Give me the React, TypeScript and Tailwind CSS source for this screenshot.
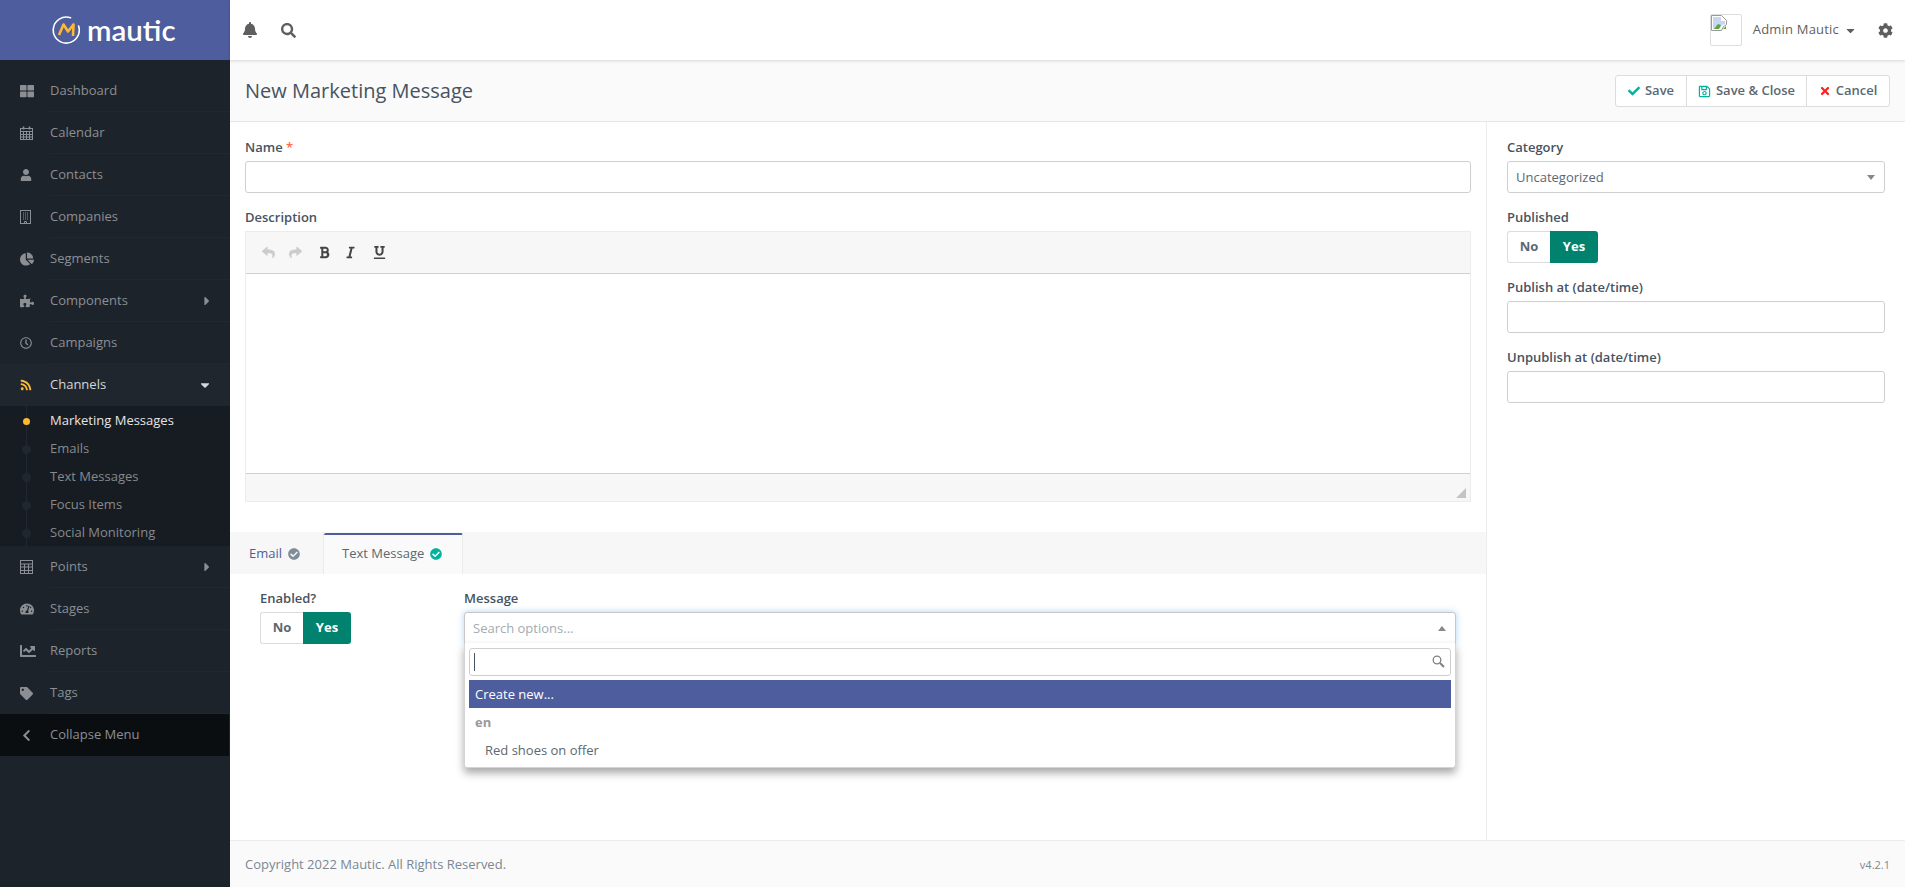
import {
  FaBell,
  FaBold,
  FaCaretDown,
  FaCaretRight,
  FaCheck,
  FaCheckCircle,
  FaChartPie,
  FaChevronLeft,
  FaCog,
  FaItalic,
  FaPuzzlePiece,
  FaReply,
  FaRegClock,
  FaRegSave,
  FaRss,
  FaSearch,
  FaShare,
  FaTag,
  FaTachometerAlt,
  FaThLarge,
  FaTimes,
  FaUnderline,
  FaUser,
  FaChartLine,
} from "react-icons/fa";
import type { ReactNode } from "react";

function CalendarIcon() {
  return (
    <svg width="13" height="14" viewBox="0 0 13 14" fill="none" stroke="currentColor" strokeWidth="1">
      <rect x="0.5" y="2.5" width="12" height="11" />
      <path d="M0.5 5.5h12M0.5 8.5h12M0.5 11h12M3.5 5.5v8M6.5 5.5v8M9.5 5.5v8" />
      <path d="M3.5 0.5v3M9.5 0.5v3" strokeWidth="1.6" />
    </svg>
  );
}

function BuildingIcon() {
  return (
    <svg width="11" height="14" viewBox="0 0 11 14" fill="none" stroke="currentColor" strokeWidth="1">
      <rect x="0.5" y="0.5" width="10" height="13" />
      <path d="M3 3h1M5 3h1M7 3h1M3 5h1M5 5h1M7 5h1M3 7h1M5 7h1M7 7h1M3 9h1M5 9h1M7 9h1" strokeWidth="1.2" />
      <path d="M4.5 13.5v-2h2v2" />
    </svg>
  );
}

function CalcIcon() {
  return (
    <svg width="13" height="14" viewBox="0 0 13 14" fill="none" stroke="currentColor" strokeWidth="1">
      <rect x="0.5" y="0.5" width="12" height="13" />
      <path d="M0.5 4h12M0.5 7h12M0.5 10.5h12M4.5 4v9.5M8.5 4v9.5" />
    </svg>
  );
}

function Logo() {
  return (
    <div className="flex items-center gap-[7px]">
      <svg width="28" height="28" viewBox="0 0 28 28" fill="none">
        <path d="M18.5 1.8A13 13 0 1 0 26.6 10" stroke="#fff" strokeWidth="1.6" strokeLinecap="round" />
        <path d="M7 19 11.5 8.5 16 15.5 21.5 8.5 21 20" stroke="#fdb933" strokeWidth="2.6" strokeLinejoin="round" />
      </svg>
      <span className="font-['Lato',sans-serif] text-[29.5px] font-semibold leading-none text-white">mautic</span>
    </div>
  );
}

function Arrow({ up }: { up?: boolean }) {
  return (
    <svg width="8" height="5" viewBox="0 0 8 5" className="text-[#888]">
      <path d={up ? "M4 0 8 5H0z" : "M0 0h8L4 5z"} fill="currentColor" />
    </svg>
  );
}

const topItems: { label: string; icon: ReactNode; caret?: boolean }[] = [
  { label: "Dashboard", icon: <FaThLarge size={14} /> },
  { label: "Calendar", icon: <CalendarIcon /> },
  { label: "Contacts", icon: <FaUser size={12} /> },
  { label: "Companies", icon: <BuildingIcon /> },
  { label: "Segments", icon: <FaChartPie size={14} /> },
  { label: "Components", icon: <FaPuzzlePiece size={14} />, caret: true },
  { label: "Campaigns", icon: <FaRegClock size={12} /> },
];

const bottomItems: { label: string; icon: ReactNode; caret?: boolean }[] = [
  { label: "Points", icon: <CalcIcon />, caret: true },
  { label: "Stages", icon: <FaTachometerAlt size={14} /> },
  { label: "Reports", icon: <FaChartLine size={16} /> },
  { label: "Tags", icon: <FaTag size={13} /> },
];

const subItems = ["Marketing Messages", "Emails", "Text Messages", "Focus Items", "Social Monitoring"];

function NavRow({ label, icon, caret }: { label: string; icon: ReactNode; caret?: boolean }) {
  return (
    <div className="flex h-[42px] shrink-0 items-center text-[13px] text-[#8b8f93]">
      <span className="flex w-[50px] shrink-0 pl-[20px]">{icon}</span>
      <div className="flex h-full flex-1 items-center justify-between border-b border-[#22282f] pr-[20px]">
        <span>{label}</span>
        {caret && <FaCaretRight size={14} className="-mr-[4px]" />}
      </div>
    </div>
  );
}

function Sidebar() {
  return (
    <aside className="flex w-[230px] shrink-0 flex-col bg-[#1d232b]">
      <div className="flex h-[60px] items-center bg-[#4e5d9d] pl-[52px]">
        <Logo />
      </div>
      <nav className="flex flex-col pt-[10px]">
        {topItems.map((item) => (
          <NavRow key={item.label} {...item} />
        ))}
        <div className="flex h-[42px] shrink-0 items-center bg-[#1f262e] text-[13px] text-[#d5d7d9]">
          <span className="flex w-[50px] shrink-0 pl-[20px] text-[#fdb933]">
            <FaRss size={12} />
          </span>
          <div className="flex flex-1 items-center justify-between pr-[20px]">
            <span>Channels</span>
            <FaCaretDown size={14} className="-mr-[2px]" />
          </div>
        </div>
        <div className="relative flex h-[140px] shrink-0 flex-col bg-[#171b22] pt-[1px]">
          <div className="absolute left-[26px] top-0 h-full w-[1px] bg-[#20272f]" />
          {subItems.map((label, i) => (
            <div
              key={label}
              className={
                i === 0
                  ? "relative flex h-[28px] shrink-0 items-center pl-[50px] text-[13px] text-[#e4e5e6]"
                  : "relative flex h-[28px] shrink-0 items-center pl-[50px] text-[13px] text-[#868a8e]"
              }
            >
              <span
                className={
                  i === 0
                    ? "absolute left-[23px] h-[7px] w-[7px] rounded-full bg-[#fdb933]"
                    : "absolute left-[22px] h-[9px] w-[9px] rounded-full bg-[#1f272f]"
                }
              />
              {label}
            </div>
          ))}
        </div>
        {bottomItems.map((item) => (
          <NavRow key={item.label} {...item} />
        ))}
        <div className="flex h-[42px] w-[229px] shrink-0 items-center bg-[#0b0e11] text-[13px] text-[#8b8f93]">
          <span className="flex w-[50px] shrink-0 pl-[20px]">
            <FaChevronLeft size={13} />
          </span>
          <span>Collapse Menu</span>
        </div>
      </nav>
    </aside>
  );
}

function BrokenImage() {
  return (
    <svg width="16" height="16" viewBox="0 0 16 16" className="block">
      <path d="M0.5 0.5h10l5 5v4l-3 2-2 4H0.5z" fill="#fff" stroke="#9a9a9a" />
      <path d="M2 2h8v4h4v3l-3 1-3 4H2z" fill="#c7d7f2" />
      <path d="M3 14l4-5 3 1-2 4z" fill="#5aa63f" />
      <path d="M12 14l3-3v3z" fill="#5aa63f" />
    </svg>
  );
}

function TopBar() {
  return (
    <header className="relative z-10 flex h-[60px] shrink-0 items-center justify-between bg-white text-[#5f5f5f] shadow-[0_1px_3px_rgba(0,0,0,0.15)]">
      <div className="flex items-center gap-[23px] pl-[12px]">
        <FaBell size={16} />
        <FaSearch size={15} />
      </div>
      <div className="flex items-center pr-[12px]">
        <div className="mr-[11px] h-[32px] w-[32px] rounded-[2px] border border-[#ddd]">
          <BrokenImage />
        </div>
        <span className="text-[13px] font-medium tracking-[0.2px]">Admin Mautic</span>
        <FaCaretDown size={13} className="ml-[5px] mr-[21px]" />
        <FaCog size={15} />
      </div>
    </header>
  );
}

function PageTitle() {
  return (
    <div className="flex h-[62px] shrink-0 items-center justify-between border-b border-[#e6e6e6] bg-[#fafafa] pl-[15px] pr-[15px] pt-[1px]">
      <h1 className="text-[20px] font-normal text-[#47535f]">New Marketing Message</h1>
      <div className="flex h-[32px] rounded-[3px] border border-[#dcdcdc] bg-white text-[13px] font-semibold text-[#5b6873]">
        <button className="flex w-[71px] items-center justify-center gap-[5px] border-r border-[#dcdcdc]">
          <FaCheck size={12} className="text-[#00b49c]" />
          Save
        </button>
        <button className="flex w-[120px] items-center justify-center gap-[5px] border-r border-[#dcdcdc]">
          <FaRegSave size={13} className="text-[#00b49c]" />
          Save &amp; Close
        </button>
        <button className="flex w-[82px] items-center justify-center gap-[5px]">
          <FaTimes size={12} className="text-[#f22]" />
          Cancel
        </button>
      </div>
    </div>
  );
}

function Label({ children }: { children: ReactNode }) {
  return <div className="mb-[4px] h-[20px] text-[13px] font-semibold leading-[20px] text-[#47535f]">{children}</div>;
}

function Toggle() {
  return (
    <div className="flex h-[32px] w-[91px] text-[13px] font-bold">
      <div className="flex w-[43px] items-center justify-center rounded-l-[3px] border border-r-0 border-[#dcdcdc] bg-white text-[#5b6873]">No</div>
      <div className="flex flex-1 items-center justify-center rounded-r-[3px] bg-[#00826e] text-white">Yes</div>
    </div>
  );
}

function TextInput() {
  return <div className="h-[32px] rounded-[3px] border border-[#cfcfcf] bg-white" />;
}

function Editor() {
  return (
    <div className="flex h-[271px] flex-col border border-[#ececec]">
      <div className="flex h-[42px] shrink-0 items-center border-b border-[#d0d0d0] bg-[#f7f7f7] pl-[16px]">
        <FaReply size={13} className="text-[#ccc]" />
        <FaShare size={13} className="ml-[14px] text-[#ccc]" />
        <FaBold size={13} className="ml-[16px] text-[#444]" />
        <FaItalic size={13} className="ml-[13px] text-[#444]" />
        <FaUnderline size={13} className="ml-[16px] text-[#444]" />
      </div>
      <div className="flex-1 bg-white" />
      <div className="relative h-[28px] shrink-0 border-t border-[#d0d0d0] bg-[#f7f7f7]">
        <svg width="10" height="10" className="absolute bottom-[3px] right-[4px]" viewBox="0 0 10 10">
          <path d="M10 0v10H0z" fill="#c4c4c4" />
        </svg>
      </div>
    </div>
  );
}

function Tabs() {
  return (
    <div className="flex h-[42px] bg-[#f7f7f7] text-[13px]">
      <div className="flex w-[94px] items-center gap-[6px] border-r border-[#eaeaea] pl-[19px] pr-[10px] pt-[1px] text-[#4e5d9d]">
        Email
        <FaCheckCircle size={12} className="text-[#7f8c99]" />
      </div>
      <div className="mt-[1px] flex w-[139px] items-center gap-[6px] rounded-t-[2px] border-r border-t-2 border-[#eaeaea] border-t-[#4e5d9d] bg-[#fafafa] pb-[2px] pl-[18px] text-[#5b6873]">
        Text Message
        <FaCheckCircle size={12} className="text-[#00b49c]" />
      </div>
    </div>
  );
}

function MessageSelect() {
  return (
    <div className="relative">
      <div className="flex h-[32px] items-center justify-between rounded-t-[3px] border border-[#c8c8c8] bg-white pl-[8px] pr-[9px] pt-[1px] text-[13px] text-[#a3abb3] shadow-[0_0_6px_rgba(102,175,233,0.55)]">
        Search options...
        <Arrow up />
      </div>
      {/* open dropdown */}
      <div className="absolute inset-x-0 top-[31px] z-10 h-[125px] rounded-b-[3px] border border-t-0 border-[#d4d4d4] bg-white px-[4px] pt-[5px] shadow-[0_5px_8px_rgba(0,0,0,0.35)]">
        <div className="flex h-[28px] items-center justify-between rounded-[3px] border border-[#cfcfcf] pl-[4px] pr-[5px]">
          <span className="h-[18px] w-[1px] bg-[#47535f]" />
          <svg width="13" height="13" viewBox="0 0 13 13" fill="none" stroke="#808080" className="mb-[1px]">
            <circle cx="5" cy="5" r="3.8" strokeWidth="1.3" />
            <path d="M8 8l4 4" strokeWidth="2" />
          </svg>
        </div>
        <div className="mt-[4px] flex h-[28px] items-center bg-[#4e5d9d] pl-[6px] pt-[1px] text-[13px] text-white">Create new...</div>
        <div className="flex h-[28px] items-center pl-[6px] pt-[1px] text-[13px] font-bold text-[#999]">en</div>
        <div className="flex h-[28px] items-center pl-[16px] pt-[1px] text-[13px] text-[#5b6873]">Red shoes on offer</div>
      </div>
    </div>
  );
}

function LeftForm() {
  return (
    <div className="flex flex-1 flex-col border-r border-[#ececec] pt-[15px]">
      <div className="px-[15px]">
        <div className="mb-[14px]">
          <Label>
            Name <span className="text-[#ff6b4a]">*</span>
          </Label>
          <TextInput />
        </div>
        <Label>Description</Label>
        <Editor />
      </div>
      <div className="mt-[30px]">
        <Tabs />
      </div>
      <div className="flex gap-[113px] px-[30px] pt-[14px]">
        <div className="w-[91px] shrink-0">
          <Label>Enabled?</Label>
          <Toggle />
        </div>
        <div className="flex-1">
          <Label>Message</Label>
          <MessageSelect />
        </div>
      </div>
    </div>
  );
}

function RightForm() {
  return (
    <div className="w-[418px] shrink-0 px-[20px] pt-[15px]">
      <div className="mb-[14px]">
        <Label>Category</Label>
        <div className="flex h-[32px] items-center justify-between rounded-[3px] border border-[#cfcfcf] bg-white pl-[8px] pr-[9px] pt-[1px] text-[13px] text-[#5b6873]">
          Uncategorized
          <Arrow />
        </div>
      </div>
      <div className="mb-[14px]">
        <Label>Published</Label>
        <Toggle />
      </div>
      <div className="mb-[14px]">
        <Label>Publish at (date/time)</Label>
        <TextInput />
      </div>
      <Label>Unpublish at (date/time)</Label>
      <TextInput />
    </div>
  );
}

export default function App() {
  return (
    <div className="flex h-[887px] overflow-hidden font-['Open_Sans',sans-serif]">
      <Sidebar />
      <main className="flex min-w-0 flex-1 flex-col bg-white">
        <TopBar />
        <PageTitle />
        <div className="flex min-h-0 flex-1">
          <LeftForm />
          <RightForm />
        </div>
        <footer className="flex h-[47px] shrink-0 items-center justify-between border-t border-[#ececec] bg-[#fafafa] px-[15px] pt-[2px] text-[#7b8794]">
          <span className="text-[13px]">Copyright 2022 Mautic. All Rights Reserved.</span>
          <span className="text-[11px]">v4.2.1</span>
        </footer>
      </main>
    </div>
  );
}
